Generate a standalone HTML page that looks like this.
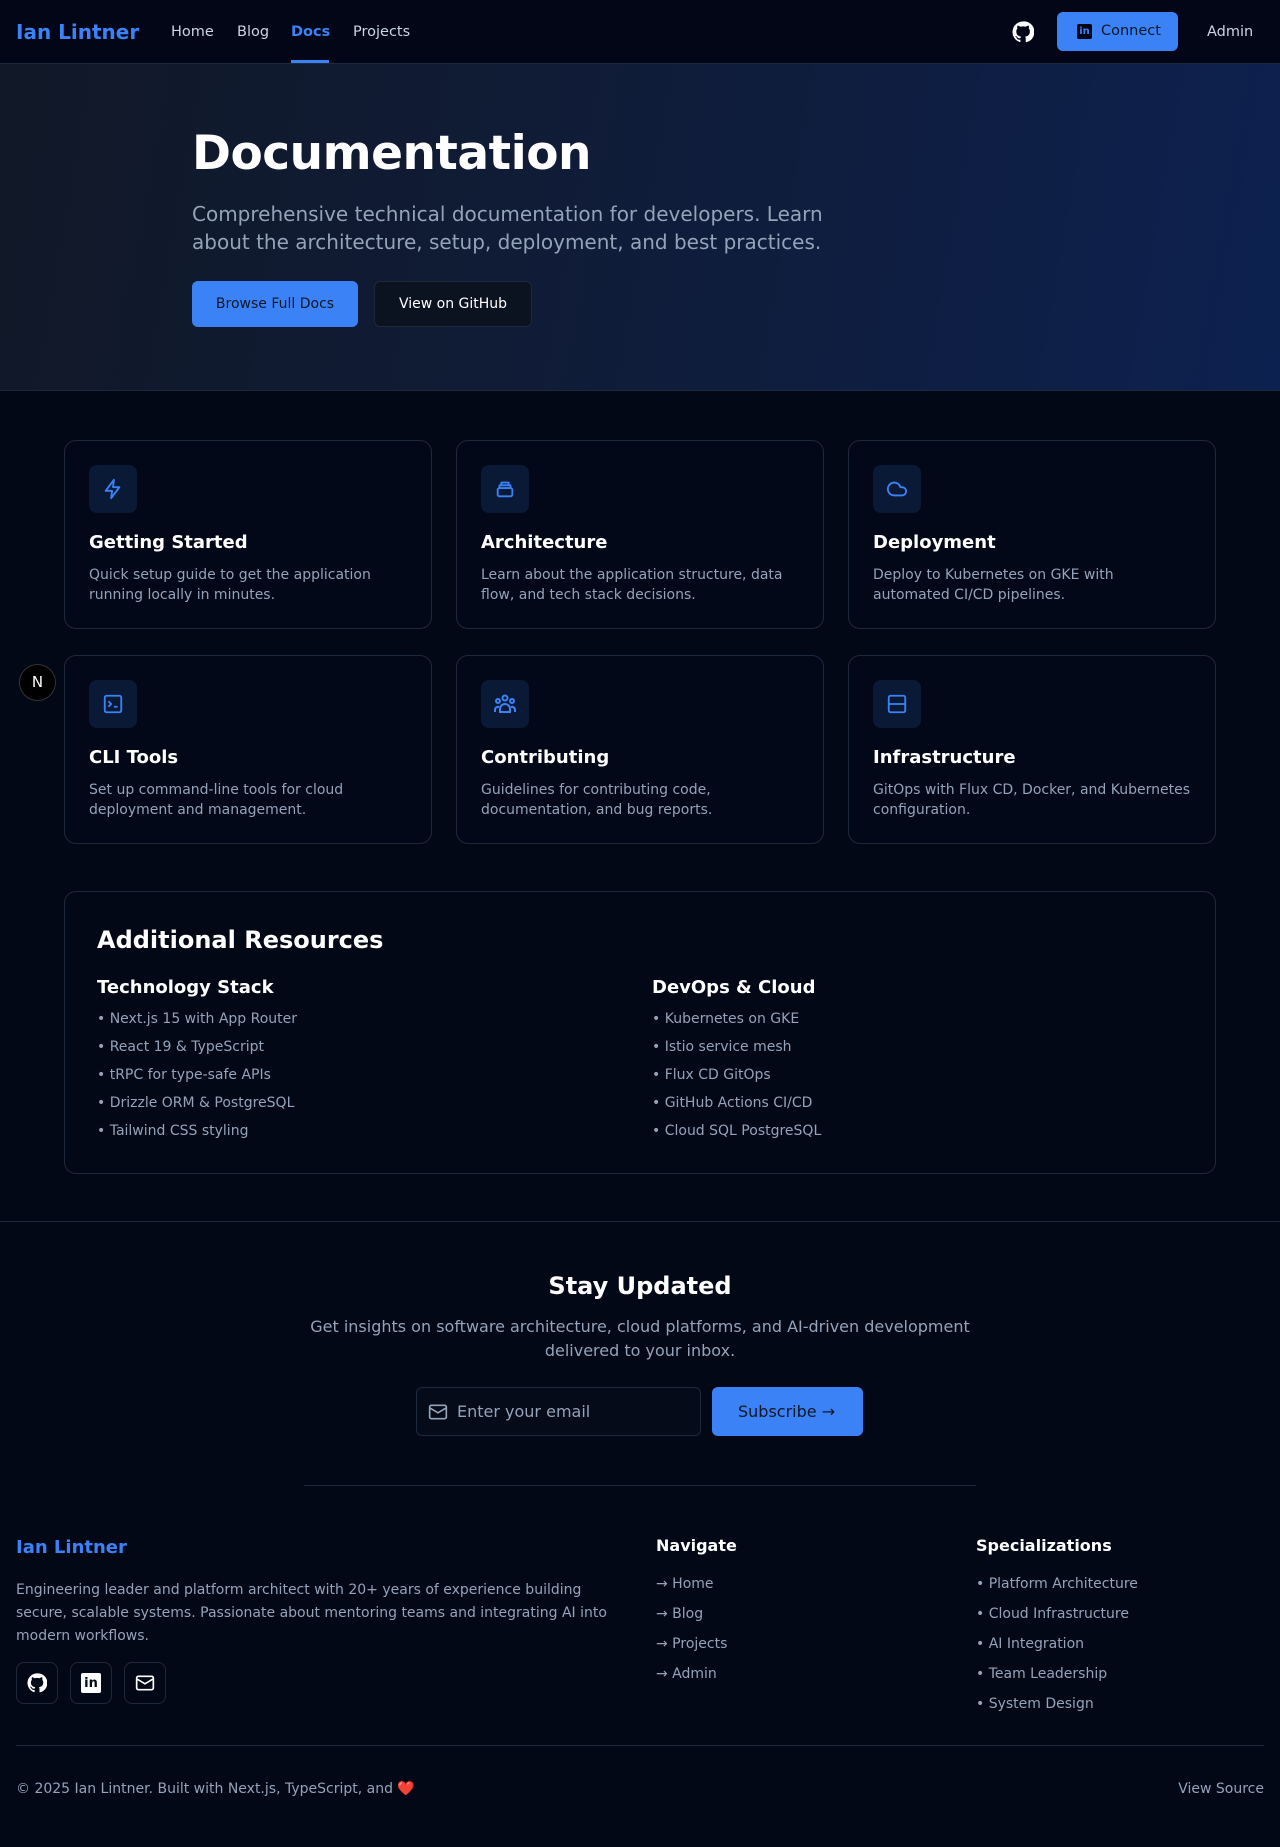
<!DOCTYPE html>
<html><head><meta charset="utf-8"><style>
*{box-sizing:border-box;margin:0;padding:0}
body{width:1280px;height:1847px;background:#030816;font-family:"DejaVu Sans","Liberation Sans",sans-serif;color:#fff;position:relative;overflow:hidden}
.abs{position:absolute}
nav{position:absolute;top:0;left:0;width:1280px;height:64px;background:#020617;border-bottom:1px solid #1e293b}
.logo{left:16px;top:20px;font-size:20px;font-weight:bold;color:#3b82f6}
.nl{top:24px;font-size:14.5px;color:#cbd5e1}
.hero{top:64px;left:0;width:1280px;height:327px;background:linear-gradient(100deg,#111827 0%,#0f1d3d 60%,#0d2150 100%);border-bottom:1px solid #1e293b}
.card{width:368px;height:189px;border:1px solid #1e293b;border-radius:12px;background:#020817}
.ib{position:absolute;left:24px;top:24px;width:48px;height:48px;border-radius:8px;background:#0a1a36;display:flex;align-items:center;justify-content:center}
.card h3{position:absolute;left:24px;top:91px;font-size:18px;font-weight:bold}
.card p{position:absolute;left:24px;top:124px;width:320px;font-size:14px;line-height:20px;color:#94a3b8}
.res li{list-style:none;font-size:14px;color:#94a3b8;height:28px}
.fl{font-size:14px;color:#94a3b8;height:30px}
.sb{width:42px;height:42px;border:1px solid #1e293b;border-radius:8px;display:flex;align-items:center;justify-content:center}
</style></head><body>
<nav>
<div class="abs logo">Ian Lintner</div>
<div class="abs nl" style="left:171px">Home</div>
<div class="abs nl" style="left:237px">Blog</div>
<div class="abs nl" style="left:291px;color:#3b82f6;font-weight:bold">Docs</div>
<div class="abs" style="left:291px;top:60px;width:38px;height:3px;background:#3b82f6"></div>
<div class="abs nl" style="left:353px">Projects</div>
<svg class="abs" style="left:1012px;top:21px" width="22" height="22" viewBox="0 0 24 24" fill="#fff"><path d="M12 .5a11.5 11.5 0 0 0-3.6 22.4c.6.1.8-.3.8-.6v-2c-3.2.7-3.900-1.5-3.9-1.5-.5-1.3-1.3-1.7-1.3-1.7-1-.7.1-.7.1-.7 1.2.1 1.8 1.2 1.8 1.2 1 1.8 2.7 1.3 3.4 1 .1-.8.4-1.3.7-1.6-2.6-.3-5.3-1.3-5.3-5.7 0-1.3.5-2.3 1.2-3.1-.1-.3-.5-1.5.1-3.1 0 0 1-.3 3.2 1.2a11 11 0 0 1 5.8 0c2.2-1.5 3.2-1.2 3.2-1.2.6 1.6.2 2.8.1 3.1.8.8 1.2 1.8 1.2 3.1 0 4.4-2.7 5.4-5.3 5.7.4.4.8 1.1.8 2.2v3.3c0 .3.2.7.8.6A11.5 11.5 0 0 0 12 .5z"/></svg>
<div class="abs" style="left:1057px;top:12px;width:121px;height:39px;background:#3b82f6;border-radius:6px"></div>
<div class="abs" style="left:1077px;top:24px;width:15px;height:15px;background:#020617;border-radius:2px;color:#3b82f6;font-size:10px;font-weight:bold;line-height:15px;text-align:center">in</div>
<div class="abs" style="left:1101px;top:23px;font-size:14.5px;color:#0f172a">Connect</div>
<div class="abs nl" style="left:1207px">Admin</div>
</nav>
<div class="abs hero"></div>
<div class="abs" style="left:192px;top:126px;font-size:47px;font-weight:bold;letter-spacing:-0.5px">Documentation</div>
<div class="abs" style="left:192px;top:200px;width:660px;font-size:20px;line-height:28px;color:#94a3b8">Comprehensive technical documentation for developers. Learn about the architecture, setup, deployment, and best practices.</div>
<div class="abs" style="left:192px;top:281px;width:166px;height:46px;background:#3b82f6;border-radius:6px;font-size:14px;color:#0f172a;text-align:center;line-height:46px">Browse Full Docs</div>
<div class="abs" style="left:374px;top:281px;width:158px;height:46px;border:1px solid #1e293b;background:#0b1220;border-radius:6px;font-size:14px;color:#fff;text-align:center;line-height:44px">View on GitHub</div>

<div class="abs" style="left:19px;top:664px;width:37px;height:37px;border-radius:50%;background:#000;border:1px solid #333;color:#fff;font-size:15px;text-align:center;line-height:35px">N</div>

<div class="abs card" style="left:64px;top:440px"><div class="ib"><svg width="22" height="22" viewBox="0 0 24 24" fill="none" stroke="#3b82f6" stroke-width="2" stroke-linejoin="round"><path d="M13 2 4 14h7l-1 8 9-12h-7z"/></svg></div><h3>Getting Started</h3><p>Quick setup guide to get the application running locally in minutes.</p></div>
<div class="abs card" style="left:456px;top:440px"><div class="ib"><svg width="22" height="22" viewBox="0 0 24 24" fill="none" stroke="#3b82f6" stroke-width="2" stroke-linejoin="round"><rect x="4" y="11" width="16" height="9" rx="2"/><path d="M6 11V8h12v3M8 8V5h8v3"/></svg></div><h3>Architecture</h3><p>Learn about the application structure, data flow, and tech stack decisions.</p></div>
<div class="abs card" style="left:848px;top:440px"><div class="ib"><svg width="22" height="22" viewBox="0 0 24 24" fill="none" stroke="#3b82f6" stroke-width="2" stroke-linejoin="round"><path d="M17.5 19H9a7 7 0 1 1 6.7-9h1.8a4.5 4.5 0 1 1 0 9z"/></svg></div><h3>Deployment</h3><p>Deploy to Kubernetes on GKE with automated CI/CD pipelines.</p></div>
<div class="abs card" style="left:64px;top:655px"><div class="ib"><svg width="22" height="22" viewBox="0 0 24 24" fill="none" stroke="#3b82f6" stroke-width="2" stroke-linejoin="round"><rect x="3" y="3" width="18" height="18" rx="2"/><path d="m7 9 3 3-3 3M13 15h4"/></svg></div><h3>CLI Tools</h3><p>Set up command-line tools for cloud deployment and management.</p></div>
<div class="abs card" style="left:456px;top:655px"><div class="ib"><svg width="24" height="24" viewBox="0 0 24 24" fill="none" stroke="#3b82f6" stroke-width="2"><circle cx="12" cy="6" r="2.5"/><circle cx="5" cy="9" r="2"/><circle cx="19" cy="9" r="2"/><path d="M7 20v-3a5 5 0 0 1 10 0v3zM2 20v-2a3 3 0 0 1 4-3M22 20v-2a3 3 0 0 0-4-3"/></svg></div><h3>Contributing</h3><p>Guidelines for contributing code, documentation, and bug reports.</p></div>
<div class="abs card" style="left:848px;top:655px"><div class="ib"><svg width="22" height="22" viewBox="0 0 24 24" fill="none" stroke="#3b82f6" stroke-width="2"><rect x="3" y="3" width="18" height="18" rx="2"/><path d="M3 12h18M17 7.5h.01M17 16.5h.01"/></svg></div><h3>Infrastructure</h3><p>GitOps with Flux CD, Docker, and Kubernetes configuration.</p></div>

<div class="abs res" style="left:64px;top:891px;width:1152px;height:283px;border:1px solid #1e293b;border-radius:12px">
<div class="abs" style="left:32px;top:34px;font-size:24px;font-weight:bold">Additional Resources</div>
<div class="abs" style="left:32px;top:85px;font-size:18px;font-weight:bold">Technology Stack</div>
<ul class="abs" style="left:32px;top:119px"><li>• Next.js 15 with App Router</li><li>• React 19 &amp; TypeScript</li><li>• tRPC for type-safe APIs</li><li>• Drizzle ORM &amp; PostgreSQL</li><li>• Tailwind CSS styling</li></ul>
<div class="abs" style="left:587px;top:85px;font-size:18px;font-weight:bold">DevOps &amp; Cloud</div>
<ul class="abs" style="left:587px;top:119px"><li>• Kubernetes on GKE</li><li>• Istio service mesh</li><li>• Flux CD GitOps</li><li>• GitHub Actions CI/CD</li><li>• Cloud SQL PostgreSQL</li></ul>
</div>

<div class="abs" style="left:0;top:1221px;width:1280px;height:1px;background:#1e293b"></div>
<div class="abs" style="left:0;top:1272px;width:1280px;text-align:center;font-size:24px;font-weight:bold">Stay Updated</div>
<div class="abs" style="left:290px;top:1315px;width:700px;text-align:center;font-size:16px;line-height:24px;color:#94a3b8">Get insights on software architecture, cloud platforms, and AI-driven development delivered to your inbox.</div>
<div class="abs" style="left:416px;top:1387px;width:285px;height:49px;border:1px solid #1e293b;border-radius:6px;background:#050b18"></div>
<svg class="abs" style="left:428px;top:1402px" width="20" height="20" viewBox="0 0 24 24" fill="none" stroke="#94a3b8" stroke-width="2"><rect x="2" y="4" width="20" height="16" rx="2"/><path d="m22 7-10 6L2 7"/></svg>
<div class="abs" style="left:457px;top:1402px;font-size:16px;color:#94a3b8">Enter your email</div>
<div class="abs" style="left:712px;top:1387px;width:151px;height:49px;background:#3b82f6;border-radius:6px;font-size:16px;color:#0f172a;line-height:49px;padding-left:26px">Subscribe →</div>
<div class="abs" style="left:304px;top:1485px;width:672px;height:1px;background:#1e293b"></div>

<div class="abs" style="left:16px;top:1537px;font-size:18px;font-weight:bold;color:#3b82f6">Ian Lintner</div>
<div class="abs" style="left:16px;top:1579px;width:610px;font-size:14px;line-height:23px;color:#94a3b8">Engineering leader and platform architect with 20+ years of experience building secure, scalable systems. Passionate about mentoring teams and integrating AI into modern workflows.</div>
<div class="abs sb" style="left:16px;top:1662px"><svg width="20" height="20" viewBox="0 0 24 24" fill="#fff"><path d="M12 .5a11.5 11.5 0 0 0-3.6 22.4c.6.1.8-.3.8-.6v-2c-3.2.7-3.9-1.5-3.9-1.5-.5-1.3-1.3-1.7-1.3-1.7-1-.7.1-.7.1-.7 1.2.1 1.8 1.2 1.8 1.2 1 1.8 2.7 1.3 3.4 1 .1-.8.4-1.3.7-1.6-2.6-.3-5.3-1.3-5.3-5.7 0-1.3.5-2.3 1.2-3.1-.1-.3-.5-1.5.1-3.1 0 0 1-.3 3.2 1.2a11 11 0 0 1 5.8 0c2.2-1.5 3.2-1.2 3.2-1.2.6 1.6.2 2.8.1 3.1.8.8 1.2 1.8 1.2 3.1 0 4.4-2.7 5.4-5.300 5.7.4.4.8 1.1.8 2.2v3.3c0 .3.2.7.8.6A11.5 11.5 0 0 0 12 .5z"/></svg></div>
<div class="abs sb" style="left:70px;top:1662px"><div style="width:20px;height:20px;background:#fff;border-radius:2px;color:#030816;font-size:13px;font-weight:bold;line-height:21px;text-align:center">in</div></div>
<div class="abs sb" style="left:124px;top:1662px"><svg width="20" height="20" viewBox="0 0 24 24" fill="none" stroke="#fff" stroke-width="2"><rect x="2" y="4" width="20" height="16" rx="2"/><path d="m22 7-10 6L2 7"/></svg></div>

<div class="abs" style="left:656px;top:1536px;font-size:16px;font-weight:bold">Navigate</div>
<div class="abs" style="left:656px;top:1576px"><div class="fl">→ Home</div><div class="fl">→ Blog</div><div class="fl">→ Projects</div><div class="fl">→ Admin</div></div>
<div class="abs" style="left:976px;top:1536px;font-size:16px;font-weight:bold">Specializations</div>
<div class="abs" style="left:976px;top:1576px"><div class="fl">• Platform Architecture</div><div class="fl">• Cloud Infrastructure</div><div class="fl">• AI Integration</div><div class="fl">• Team Leadership</div><div class="fl">• System Design</div></div>

<div class="abs" style="left:16px;top:1745px;width:1248px;height:1px;background:#1e293b"></div>
<div class="abs" style="left:16px;top:1781px;font-size:14px;color:#94a3b8">© 2025 Ian Lintner. Built with Next.js, TypeScript, and <span style="color:#ef4444">❤️</span></div>
<div class="abs" style="right:16px;top:1781px;font-size:14px;color:#94a3b8">View Source</div>
</body></html>
